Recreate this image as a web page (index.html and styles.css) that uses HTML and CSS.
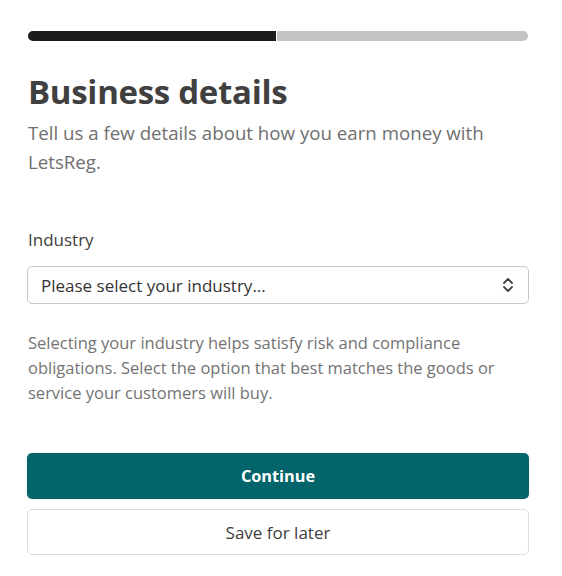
FILE: index.html
```html
<!DOCTYPE html>
<html>
<head>
<meta charset="utf-8">
<link rel="stylesheet" href="styles.css">
</head>
<body>
<main class="page">
  <div class="progress"><div class="progress-fill"></div></div>
  <h1 class="title">Business details</h1>
  <p class="subtitle">Tell us a few details about how you earn money with LetsReg.</p>
  <label class="label">Industry</label>
  <div class="select">
    <span class="select-text">Please select your industry...</span>
    <svg class="chevrons" width="12" height="16" viewBox="0 0 12 16"><path d="M2 6 L6 2 L10 6 M2 10 L6 14 L10 10" fill="none" stroke="#444" stroke-width="1.8" stroke-linecap="round" stroke-linejoin="round"/></svg>
  </div>
  <p class="help">Selecting your industry helps satisfy risk and compliance obligations. Select the option that best matches the goods or service your customers will buy.</p>
  <button class="btn btn-primary">Continue</button>
  <button class="btn btn-secondary">Save for later</button>
</main>
</body>
</html>
```
FILE: styles.css
```css
html, body { margin: 0; padding: 0; background: #fff; }
body { font-family: "Open Sans", "Noto Sans", sans-serif; color: #404040; }
.page { width: 502px; padding: 31px 0 0 27px; display: flex; flex-direction: column; }
.progress { margin: 0 1px; height: 10px; border-radius: 5px; background: #c4c4c4; overflow: hidden; display: flex; }
.progress-fill { width: 248px; background: #1c1c1c; border-right: 1px solid #fff; }
.title { margin: 29px 0 0 1px; font-size: 33px; font-weight: 700; line-height: 44px; color: #404040; letter-spacing: -0.3px; }
.subtitle { margin: 4px 0 0 1px; font-size: 18.7px; line-height: 29px; color: #707070; }
.label { margin-top: 52px; margin-left: 1px; font-size: 17px; line-height: 24px; color: #404040; }
.select { margin-top: 14px; height: 36px; border: 1px solid #c8c8c8; border-radius: 5px; display: flex; align-items: center; justify-content: space-between; padding: 0 14px 0 13px; }
.select-text { font-size: 17px; font-weight: 500; color: #333; }
.help { margin: 26px 0 0 1px; font-size: 16.5px; line-height: 25px; color: #737373; }
.btn { font-family: inherit; font-size: 17px; border-radius: 5px; width: 502px; cursor: pointer; }
.btn-primary { margin-top: 48px; height: 46px; background: #03646b; color: #fff; font-weight: 700; font-size: 16.3px; border: none; }
.btn-secondary { margin-top: 10px; height: 46px; background: #fff; color: #404040; border: 1px solid #d6dce3; }
```
